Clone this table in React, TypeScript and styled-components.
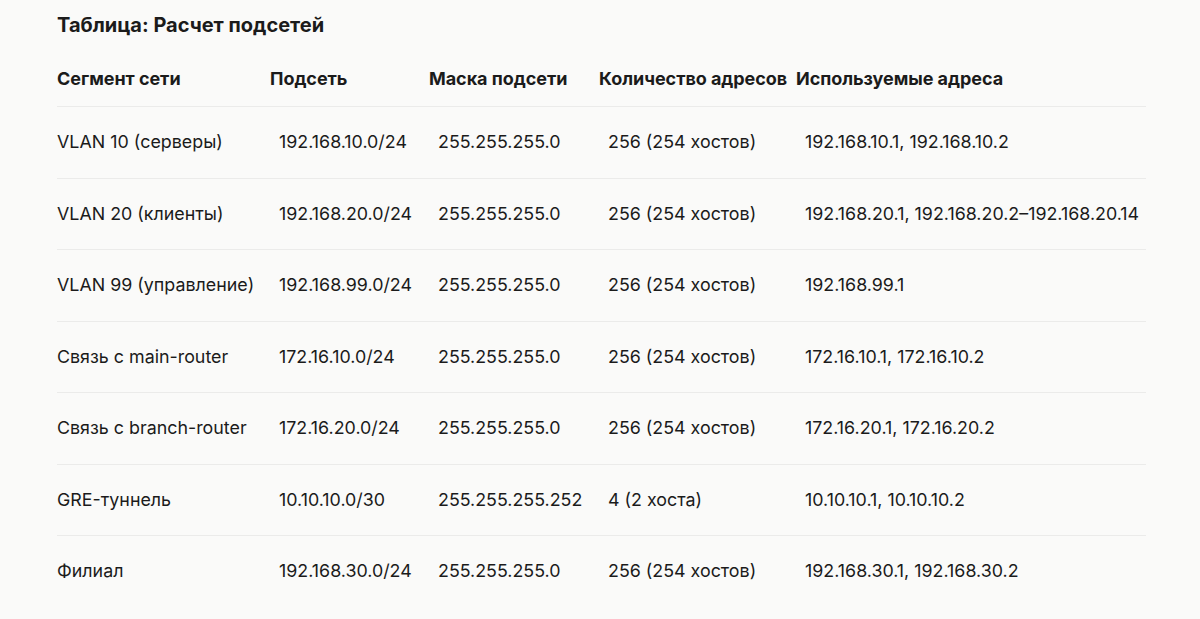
import React from "react";
import styled, { createGlobalStyle } from "styled-components";

const Global = createGlobalStyle`
  html, body { margin: 0; padding: 0; background: #fafaf9; }
  body { font-family: Inter, "Noto Sans", sans-serif; color: #1b1b1b; }
`;

const Page = styled.div`
  padding: 12px 54px 0 57px;
`;

const Title = styled.h3`
  margin: 0 0 13px;
  font-size: 20px;
  line-height: 26px;
  font-weight: 700;
`;

const Table = styled.table`
  border-collapse: collapse;
  table-layout: fixed;
  width: 1089px;
  font-size: 17.85px;
`;

const Col = styled.col<{ $w: number }>`
  width: ${(p) => p.$w}px;
`;

const Th = styled.th`
  text-align: left;
  font-weight: 700;
  font-size: 18px;
  padding: 0;
  height: 55px;
  line-height: 24px;
  white-space: nowrap;
  letter-spacing: -0.05px;
  border-bottom: 1px solid #ebebea;
`;

const Td = styled.td`
  padding: 0 0 0 9px;
  height: 70.5px;
  line-height: 24px;
  white-space: nowrap;
  font-weight: 400;
  &:first-child { padding-left: 0; }
`;

const Tr = styled.tr`
  border-bottom: 1px solid #ebebea;
  &:last-child { border-bottom: none; }
`;

const rows: string[][] = [
  ["VLAN 10 (серверы)", "192.168.10.0/24", "255.255.255.0", "256 (254 хостов)", "192.168.10.1, 192.168.10.2"],
  ["VLAN 20 (клиенты)", "192.168.20.0/24", "255.255.255.0", "256 (254 хостов)", "192.168.20.1, 192.168.20.2–192.168.20.14"],
  ["VLAN 99 (управление)", "192.168.99.0/24", "255.255.255.0", "256 (254 хостов)", "192.168.99.1"],
  ["Связь с main-router", "172.16.10.0/24", "255.255.255.0", "256 (254 хостов)", "172.16.10.1, 172.16.10.2"],
  ["Связь с branch-router", "172.16.20.0/24", "255.255.255.0", "256 (254 хостов)", "172.16.20.1, 172.16.20.2"],
  ["GRE-туннель", "10.10.10.0/30", "255.255.255.252", "4 (2 хоста)", "10.10.10.1, 10.10.10.2"],
  ["Филиал", "192.168.30.0/24", "255.255.255.0", "256 (254 хостов)", "192.168.30.1, 192.168.30.2"],
];

const headers = ["Сегмент сети", "Подсеть", "Маска подсети", "Количество адресов", "Используемые адреса"];
const widths = [213, 159, 170, 197, 350];

export default function App() {
  return (
    <>
      <Global />
      <Page>
        <Title>Таблица: Расчет подсетей</Title>
        <Table>
          <colgroup>
            {widths.map((w, i) => (
              <Col key={i} $w={w} />
            ))}
          </colgroup>
          <thead>
            <tr>
              {headers.map((h) => (
                <Th key={h}>{h}</Th>
              ))}
            </tr>
          </thead>
          <tbody>
            {rows.map((r, i) => (
              <Tr key={i}>
                {r.map((c, j) => (
                  <Td key={j}>{c}</Td>
                ))}
              </Tr>
            ))}
          </tbody>
        </Table>
      </Page>
    </>
  );
}
